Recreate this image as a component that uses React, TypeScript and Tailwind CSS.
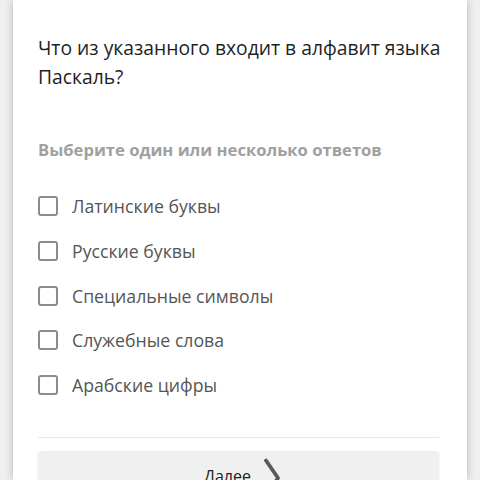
const answers = [
  "Латинские буквы",
  "Русские буквы",
  "Специальные символы",
  "Служебные слова",
  "Арабские цифры",
];

export default function App() {
  return (
    <div
      className="h-[480px] w-[480px] overflow-hidden bg-[#efefef] px-[13px]"
      style={{ fontFamily: '"Open Sans", "Noto Sans", sans-serif' }}
    >
      <div className="h-full bg-white pl-[25px] pr-[28px] pt-[33px] shadow-[0_0_8px_rgba(0,0,0,0.25)]">
        <h1 className="mr-[-20px] text-[19.3px] leading-[29px] text-[#1f1f1f]">
          Что из указанного входит в алфавит языка Паскаль?
        </h1>

        <p className="mt-[48px] text-[16.6px] font-bold leading-[22px] text-[#a0a0a0]">
          Выберите один или несколько ответов
        </p>

        <ul className="mt-[35px] flex flex-col gap-[24.8px]">
          {answers.map((a) => (
            <li key={a} className="flex h-[20px] items-center gap-[14px]">
              <span className="h-[20px] w-[20px] shrink-0 rounded-[3px] border-2 border-[#8c8c8c]" />
              <span className="text-[17.7px] leading-[20px] text-[#555555]">{a}</span>
            </li>
          ))}
        </ul>

        <div className="mt-[42px] h-px bg-[#e6e6e6]" />

        <button className="mt-[13px] flex h-[50px] w-full items-center justify-center gap-[12px] rounded bg-[#f0f0f0] pl-[8px] text-[16px] leading-[22px] text-[#222] shadow-[0_1px_2px_rgba(0,0,0,0.12)]">
          Далее
          <svg width="18" height="40" viewBox="0 0 18 40" fill="none" className="mt-[4px] shrink-0">
            <path d="M3 2.5 L15 20 L3 37.5" stroke="#5a5a5a" strokeWidth="3.8" strokeLinecap="round" strokeLinejoin="round" />
          </svg>
        </button>
      </div>
    </div>
  );
}
